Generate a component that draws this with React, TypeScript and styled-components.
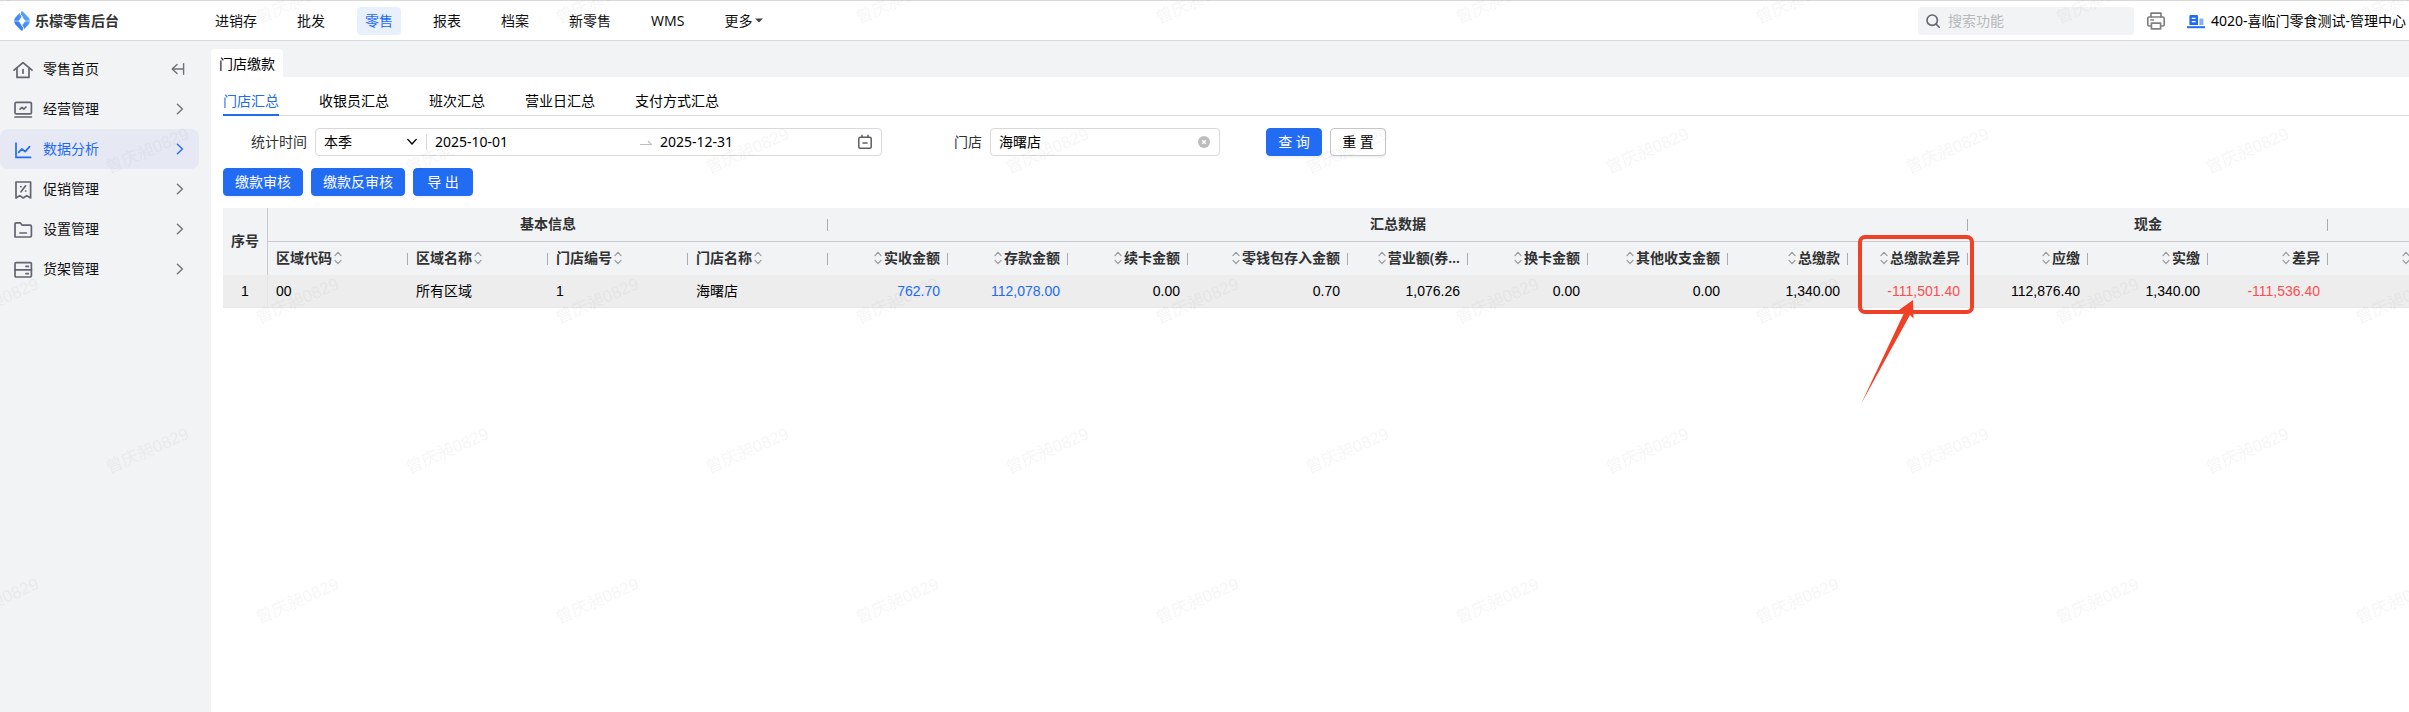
import React from "react";
import styled, { createGlobalStyle } from "styled-components";

const ui = `"Noto Sans", "Noto Sans CJK SC", sans-serif`;
const numeric = `"Liberation Sans", "Noto Sans CJK SC", sans-serif`;

const blue = "#226bf3";
const grey = "#f1f3f5";
const line = "#d9d9d9";

const GlobalStyle = createGlobalStyle`
  *, *::before, *::after { box-sizing: border-box; }
  body { margin: 0; background: #fff; color: #000; font: 14px/20px ${ui}; overflow-x: hidden; }
  button, input, select { font: inherit; color: inherit; }
  a { color: inherit; text-decoration: none; }
`;

const Page = styled.div`
  position: relative;
  display: flex;
  flex-direction: column;
  min-height: 100vh;
  overflow: hidden;
`;

const Header = styled.header`
  display: flex;
  align-items: center;
  height: 41px;
  padding-right: 3px;
  background: #fff;
  border-top: 1px solid ${line};
  border-bottom: 1px solid ${line};
`;

const Brand = styled.a`
  display: flex;
  align-items: center;
  gap: 5px;
  width: 207px;
  padding-left: 14px;
  color: #333;
  font-weight: 700;
`;

const Nav = styled.nav`
  display: flex;
  gap: 24px;
  flex: 1;
`;

const NavLink = styled.a<{ $active?: boolean }>`
  display: flex;
  align-items: center;
  gap: 2px;
  height: 28px;
  padding: 0 8px;
  border-radius: 4px;
  white-space: nowrap;
  background: ${(p) => (p.$active ? "#e8effd" : "transparent")};
  color: ${(p) => (p.$active ? blue : "#111")};
`;

const HeaderTools = styled.div`
  display: flex;
  align-items: center;
`;

const SearchBox = styled.label`
  display: flex;
  align-items: center;
  gap: 8px;
  width: 216px;
  height: 28px;
  padding: 0 8px;
  border-radius: 4px;
  background: ${grey};
`;

const SearchInput = styled.input`
  flex: 1;
  min-width: 0;
  padding: 0;
  border: 0;
  outline: 0;
  background: transparent;
  &::placeholder { color: #b8b9bc; opacity: 1; }
`;

const IconButton = styled.button`
  display: flex;
  padding: 0;
  border: 0;
  background: transparent;
  color: #707277;
`;

const PrintButton = styled(IconButton)`
  margin: 0 21px 0 12px;
`;

const Account = styled.a`
  display: flex;
  align-items: center;
  gap: 6px;
  white-space: nowrap;
`;

const Body = styled.div`
  display: flex;
  flex: 1;
  background: ${grey};
`;

const Sidebar = styled.aside`
  flex: none;
  width: 211px;
  padding: 8px 12px 0 0;
`;

const SideItem = styled.div<{ $active?: boolean }>`
  display: flex;
  align-items: center;
  height: 40px;
  padding: 0 14px 0 13px;
  border-radius: 8px;
  background: ${(p) => (p.$active ? "#e6e9f4" : "transparent")};
  color: ${(p) => (p.$active ? blue : "#111")};
`;

const SideLink = styled.a<{ $active?: boolean }>`
  display: flex;
  align-items: center;
  gap: 10px;
  flex: 1;
  svg { color: ${(p) => (p.$active ? blue : "#63646f")}; }
`;

const SideToggle = styled(IconButton)<{ $active?: boolean }>`
  color: ${(p) => (p.$active ? blue : "#707277")};
`;

const Main = styled.main`
  flex: 1;
  min-width: 0;
  display: flex;
  flex-direction: column;
  padding-top: 8px;
`;

const PageTab = styled.a`
  align-self: flex-start;
  height: 28px;
  padding: 0 8px;
  line-height: 30px;
  border-radius: 4px 4px 0 0;
  background: #fff;
`;

const Content = styled.section`
  flex: 1;
  padding-left: 12px;
  background: #fff;
`;

const Tabs = styled.div`
  display: flex;
  gap: 40px;
  height: 39px;
  border-bottom: 1px solid ${line};
`;

const Tab = styled.button<{ $active?: boolean }>`
  height: 39px;
  padding: 14px 0 3px;
  border: 0;
  border-bottom: 2px solid ${(p) => (p.$active ? blue : "transparent")};
  background: none;
  color: ${(p) => (p.$active ? blue : "#000")};
  white-space: nowrap;
`;

const Filters = styled.form`
  display: flex;
  align-items: center;
  padding: 12px 0;
`;

const Field = styled.div`
  display: flex;
  align-items: center;
  gap: 8px;
  color: #000;
`;

const DateField = styled(Field)`
  margin-left: 28px;
`;

const StoreField = styled(Field)`
  margin-left: 72px;
`;

const Label = styled.label`
  color: #303133;
  white-space: nowrap;
`;

const Box = styled.div<{ $width: number }>`
  display: flex;
  align-items: center;
  width: ${(p) => p.$width}px;
  height: 28px;
  padding-right: 9px;
  border: 1px solid ${line};
  border-radius: 4px;
`;

const SelectWrap = styled.div`
  display: flex;
  align-items: center;
  width: 111px;
  height: 16px;
  padding-right: 9px;
  border-right: 1px solid ${line};
`;

const PeriodSelect = styled.select`
  flex: 1;
  min-width: 0;
  padding: 0 0 0 8px;
  border: 0;
  outline: 0;
  appearance: none;
  background: transparent;
`;

const TextInput = styled.input<{ $width?: number }>`
  flex: ${(p) => (p.$width ? `0 0 ${p.$width}px` : "1")};
  min-width: 0;
  padding: 0 8px;
  border: 0;
  outline: 0;
  background: transparent;
`;

const FilterActions = styled.div`
  display: flex;
  gap: 8px;
  margin-left: 46px;
`;

const Button = styled.button<{ $plain?: boolean; $min?: number }>`
  min-width: ${(p) => p.$min ?? 56}px;
  height: 28px;
  padding: 0 11px;
  border: 1px solid ${(p) => (p.$plain ? "#c4c5c8" : blue)};
  border-radius: 4px;
  background: ${(p) => (p.$plain ? "#fff" : blue)};
  color: ${(p) => (p.$plain ? "#000" : "#fff")};
  box-shadow: 0 2px 0 rgba(0, 0, 0, 0.04);
  white-space: nowrap;
`;

const Toolbar = styled.div`
  display: flex;
  gap: 8px;
  padding-bottom: 12px;
`;

const TableArea = styled.div`
  position: relative;
`;

const TableScroll = styled.div`
  overflow: hidden;
`;

const Table = styled.table`
  width: 2195px;
  table-layout: fixed;
  border-collapse: separate;
  border-spacing: 0;
  font-family: ${numeric};
`;

const Th = styled.th<{ $align?: string; $group?: boolean; $index?: boolean }>`
  height: ${(p) => (p.$group ? 34 : 33)}px;
  padding: 0 8px 2px;
  overflow: hidden;
  color: #303133;
  font-family: ${ui};
  font-weight: 600;
  text-align: ${(p) => p.$align ?? "center"};
  white-space: nowrap;
  background: ${(p) =>
    p.$index ? grey : `linear-gradient(#a9abb8, #a9abb8) no-repeat right center / 1px 12px ${grey}`};
  border-bottom: ${(p) => (p.$group ? "1px solid #c8cacf" : "0")};
  border-right: ${(p) => (p.$index ? "1px solid #c8cacf" : "0")};
`;

const HeadCell = styled.span<{ $end?: boolean }>`
  display: flex;
  align-items: center;
  gap: 2px;
  flex-direction: ${(p) => (p.$end ? "row-reverse" : "row")};
`;

const Td = styled.td<{ $align?: string; $tone?: string; $index?: boolean }>`
  height: 33px;
  padding: 0 8px 1px;
  background: #ededed;
  border-bottom: 1px solid #e6e6e6;
  border-right: ${(p) => (p.$index ? "1px solid #e6e6e6" : "0")};
  text-align: ${(p) => p.$align ?? "left"};
  color: ${(p) => p.$tone ?? "#000"};
  white-space: nowrap;
`;

const Callout = styled.svg`
  position: absolute;
  left: 1634px;
  top: 26px;
  pointer-events: none;
`;

const WatermarkLayer = styled.svg`
  position: absolute;
  inset: 0;
  width: 100%;
  height: 100%;
  pointer-events: none;
`;

const strokeProps = {
  fill: "none",
  stroke: "currentColor",
  strokeWidth: 1.7,
  strokeLinecap: "round" as const,
  strokeLinejoin: "round" as const,
};

const sideIcons: Record<string, React.ReactNode> = {
  home: (
    <>
      <path d="M1 11.2 10 3.6l9 7.600" />
      <path d="M4 9.400V18.400h12V9.400" />
      <path d="M10 10.600v3.600" />
    </>
  ),
  operate: (
    <>
      <rect x="2" y="3.400" width="16.4" height="11.4" rx="1.4" />
      <path d="M2 18h16.4" />
      <path d="m7 10.200 2-1.8 1.8 1.8L13 8" />
    </>
  ),
  chart: (
    <>
      <path d="M3 4v14.4h14.6" />
      <path d="m5.6 13.4 3.2-3.400 3.4 2.600 4.400-5" />
    </>
  ),
  promo: (
    <>
      <path d="M3 3h14.6V19l-3.8-2.4-3.5 2.4-3.5-2.4L3 19z" />
      <path d="m12.6 6.8-4.6 6M7.8 7.6h.2M12.6 12h.2" />
    </>
  ),
  folder: (
    <>
      <path d="M2 18V5c0-.7.4-1.2 1.2-1.2h4l2 2.4h8c.8 0 1.2.4 1.2 1.2v9.400c0 .8-.4 1.2-1.2 1.2z" />
      <path d="M7 14h6.4" />
    </>
  ),
  shelf: (
    <>
      <rect x="2" y="3.600" width="16.4" height="14.4" rx="1.2" />
      <path d="M2 10.8h16.4M13 7.400h2.4M13 14.600h2.4" />
    </>
  ),
};

function SideIcon({ name }: { name: string }) {
  return (
    <svg width="20" height="20" viewBox="0 0 20 20" aria-hidden="true" {...strokeProps}>
      {sideIcons[name]}
    </svg>
  );
}

function Chevron({ down }: { down?: boolean }) {
  return (
    <svg width="10" height="12" viewBox="0 0 10 12" aria-hidden="true" {...strokeProps} strokeWidth={1.4}>
      <path d={down ? "M0.8 3.4 5 8l4.2-4.6" : "m2.4 1.2 5 4.8-5 4.8"} />
    </svg>
  );
}

function Sorter() {
  return (
    <svg width="8" height="14" viewBox="0 0 8 14" aria-hidden="true" {...strokeProps} stroke="#9a9ca0" strokeWidth={1.3}>
      <path d="M1 4.6 4 1.4l3 3.2M1 9.4l3 3.2 3-3.2" />
    </svg>
  );
}

function Logo() {
  return (
    <svg width="16" height="20" viewBox="0 0 16 20" aria-hidden="true">
      <defs>
        <linearGradient id="brand" x1="1" y1="0" x2="0" y2="1">
          <stop offset="0" stopColor="#6db2fd" />
          <stop offset="1" stopColor="#1f6cf2" />
        </linearGradient>
      </defs>
      <path
        d="M7 .8C7.600.2 8.400.2 9 .8l5.600 5.800c1.600 1.800 1.600 5 0 6.800L9 19.200c-.6.6-1.400.6-2 0L1.400 13.400C-.2 11.600-.2 8.400 1.400 6.600z"
        fill="url(#brand)"
      />
      <path d="M8 5.200 11.400 10 8 14.800 4.600 10z" fill="#fff" />
      <path d="M8.400 6 6.600 3.600V0M7.600 14l1.800 2.400V20" fill="none" stroke="#fff" strokeWidth="1" />
      <path d="M5 10H.2M11 10h4.800" stroke="#fff" strokeWidth="0.6" />
    </svg>
  );
}

const navItems = ["进销存", "批发", "零售", "报表", "档案", "新零售", "WMS", "更多"];

const sideItems = [
  { icon: "home", label: "零售首页" },
  { icon: "operate", label: "经营管理" },
  { icon: "chart", label: "数据分析" },
  { icon: "promo", label: "促销管理" },
  { icon: "folder", label: "设置管理" },
  { icon: "shelf", label: "货架管理" },
];

const tabs = ["门店汇总", "收银员汇总", "班次汇总", "营业日汇总", "支付方式汇总"];

type Column = { title: string; value: string; width: number; text?: boolean; tone?: string };

const columns: Column[] = [
  { title: "区域代码", value: "00", width: 140, text: true },
  { title: "区域名称", value: "所有区域", width: 140, text: true },
  { title: "门店编号", value: "1", width: 140, text: true },
  { title: "门店名称", value: "海曙店", width: 140, text: true },
  { title: "实收金额", value: "762.70", width: 120, tone: blue },
  { title: "存款金额", value: "112,078.00", width: 120, tone: blue },
  { title: "续卡金额", value: "0.00", width: 120 },
  { title: "零钱包存入金额", value: "0.70", width: 160 },
  { title: "营业额(券…", value: "1,076.26", width: 120 },
  { title: "换卡金额", value: "0.00", width: 120 },
  { title: "其他收支金额", value: "0.00", width: 140 },
  { title: "总缴款", value: "1,340.00", width: 120 },
  { title: "总缴款差异", value: "-111,501.40", width: 120, tone: "#ff4d4f" },
  { title: "应缴", value: "112,876.40", width: 120 },
  { title: "实缴", value: "1,340.00", width: 120 },
  { title: "差异", value: "-111,536.40", width: 120, tone: "#ff4d4f" },
  { title: "", value: "", width: 90 },
];

function DataTable() {
  return (
    <Table>
      <colgroup>
        <col width={45} />
        {columns.map((c, i) => (
          <col key={i} width={c.width} />
        ))}
      </colgroup>
      <thead>
        <tr>
          <Th rowSpan={2} $index>序号</Th>
          <Th colSpan={4} $group>基本信息</Th>
          <Th colSpan={9} $group>汇总数据</Th>
          <Th colSpan={3} $group>现金</Th>
          <Th $group />
        </tr>
        <tr>
          {columns.map((c, i) => (
            <Th key={i} $align={c.text ? "left" : "right"}>
              <HeadCell $end={!c.text}>
                {c.title}
                <Sorter />
              </HeadCell>
            </Th>
          ))}
        </tr>
      </thead>
      <tbody>
        <tr>
          <Td $index $align="center">1</Td>
          {columns.map((c, i) => (
            <Td key={i} $align={c.text ? "left" : "right"} $tone={c.tone}>
              {c.value}
            </Td>
          ))}
        </tr>
      </tbody>
    </Table>
  );
}

function Watermark() {
  return (
    <WatermarkLayer aria-hidden="true">
      <defs>
        <pattern id="wm" x="0" y="0" width="300" height="300" patternUnits="userSpaceOnUse">
          <g fill="#000" fillOpacity="0.035" fontSize="17" fontFamily={numeric}>
            <text transform="translate(109 174) rotate(-24)">曾庆昶0829</text>
            <text transform="translate(259 24) rotate(-24)">曾庆昶0829</text>
            <text transform="translate(-41 24) rotate(-24)">曾庆昶0829</text>
            <text transform="translate(259 324) rotate(-24)">曾庆昶0829</text>
            <text transform="translate(-41 324) rotate(-24)">曾庆昶0829</text>
          </g>
        </pattern>
      </defs>
      <rect width="100%" height="100%" fill="url(#wm)" />
    </WatermarkLayer>
  );
}

export default function App() {
  return (
    <Page>
      <GlobalStyle />
      <Header>
        <Brand href="#">
          <Logo />
          乐檬零售后台
        </Brand>
        <Nav>
          {navItems.map((n) => (
            <NavLink key={n} href="#" $active={n === "零售"}>
              {n}
              {n === "更多" && (
                <svg width="10" height="6" viewBox="0 0 10 6" aria-hidden="true">
                  <path d="M1 .5h8L5 4.500z" fill="#444" />
                </svg>
              )}
            </NavLink>
          ))}
        </Nav>
        <HeaderTools>
          <SearchBox>
            <svg width="14" height="14" viewBox="0 0 14 14" aria-hidden="true" {...strokeProps} stroke="#63646f" strokeWidth={1.6}>
              <circle cx="6.200" cy="6.200" r="5.200" />
              <path d="m10.200 10.200 3 3" />
            </svg>
            <SearchInput placeholder="搜索功能" aria-label="搜索功能" />
          </SearchBox>
          <PrintButton aria-label="打印">
            <svg width="20" height="20" viewBox="0 0 20 20" aria-hidden="true" {...strokeProps} stroke="#808080">
              <path d="M5 6V2.200h10V6" />
              <path d="M5 15H3.200C2.400 15 1.800 14.500 1.800 13.600V7.600C1.800 6.600 2.400 6 3.200 6h13.600c.8 0 1.400.6 1.400 1.600v6c0 .9-.6 1.400-1.400 1.400H15" />
              <path d="M5.400 12.200h9.200v5.600H5.400zM5 9h2.400" />
            </svg>
          </PrintButton>
          <Account href="#">
            <svg width="18" height="16" viewBox="0 0 18 16" aria-hidden="true">
              <path d="M2.400 12V3.200C2.400 2.500 2.900 2 3.600 2h6.200c.7 0 1.200.5 1.200 1.200V12z" fill={blue} />
              <path d="M4.800 5.400h3.800M4.800 8.600h3.800" stroke="#fff" strokeWidth="1.400" />
              <path d="M12.400 5.600h2.800c.8 0 1.200.4 1.200 1.200V12h-4z" fill="#86aef9" />
              <path d="M0 14.200h18" stroke={blue} strokeWidth="2" />
            </svg>
            4020-喜临门零食测试-管理中心
          </Account>
        </HeaderTools>
      </Header>

      <Body>
        <Sidebar>
          {sideItems.map((s) => {
            const active = s.icon === "chart";
            return (
              <SideItem key={s.icon} $active={active}>
                <SideLink href="#" $active={active}>
                  <SideIcon name={s.icon} />
                  {s.label}
                </SideLink>
                <SideToggle aria-label={s.label} $active={active}>
                  {s.icon === "home" ? (
                    <svg width="14" height="12" viewBox="0 0 14 12" aria-hidden="true" {...strokeProps} strokeWidth={1.4}>
                      <path d="M6 1.400 1.200 6 6 10.600M1.200 6H12M12.600.8v10.400" />
                    </svg>
                  ) : (
                    <Chevron />
                  )}
                </SideToggle>
              </SideItem>
            );
          })}
        </Sidebar>

        <Main>
          <PageTab href="#">门店缴款</PageTab>
          <Content>
            <Tabs role="tablist">
              {tabs.map((t, i) => (
                <Tab key={t} role="tab" aria-selected={i === 0} $active={i === 0}>
                  {t}
                </Tab>
              ))}
            </Tabs>

            <Filters onSubmit={(e) => e.preventDefault()}>
              <DateField>
                <Label htmlFor="period">统计时间</Label>
                <Box $width={567}>
                  <SelectWrap>
                    <PeriodSelect id="period" defaultValue="本季">
                      <option>本季</option>
                    </PeriodSelect>
                    <Chevron down />
                  </SelectWrap>
                  <TextInput $width={213} aria-label="开始日期" defaultValue="2025-10-01" />
                  <svg width="12" height="8" viewBox="0 0 12 8" aria-hidden="true">
                    <path d="M0 6.500h11.500L8 3" fill="none" stroke="#bfbfbf" strokeWidth="1.200" />
                  </svg>
                  <TextInput aria-label="结束日期" defaultValue="2025-12-31" />
                  <svg width="14" height="16" viewBox="0 0 14 16" aria-hidden="true" {...strokeProps} stroke="#5c5d62" strokeWidth={1.5}>
                    <rect x="0.800" y="3.200" width="12.400" height="11" rx="1.500" />
                    <path d="M4 1.200v2M10 1.200v2M5 9h4" />
                  </svg>
                </Box>
              </DateField>
              <StoreField>
                <Label htmlFor="store">门店</Label>
                <Box $width={230}>
                  <TextInput id="store" defaultValue="海曙店" />
                  <IconButton type="button" aria-label="清除">
                    <svg width="12" height="12" viewBox="0 0 12 12" aria-hidden="true">
                      <circle cx="6" cy="6" r="6" fill="#bdbdbd" />
                      <path d="m4.200 4.200 3.600 3.600M7.800 4.200 4.200 7.800" stroke="#fff" strokeWidth="1.400" />
                    </svg>
                  </IconButton>
                </Box>
              </StoreField>
              <FilterActions>
                <Button type="submit">查 询</Button>
                <Button type="reset" $plain>重 置</Button>
              </FilterActions>
            </Filters>

            <Toolbar>
              <Button>缴款审核</Button>
              <Button>缴款反审核</Button>
              <Button $min={60}>导 出</Button>
            </Toolbar>

            <TableArea>
              <TableScroll>
                <DataTable />
              </TableScroll>
              <Callout width="120" height="174" viewBox="0 0 120 174" aria-hidden="true">
                <rect x="3" y="3" width="112" height="75" rx="5" fill="none" stroke="#ee4128" strokeWidth="4" />
                <path d="M56 66 42 76l5 3L4 170 53 81l3.500 3.500z" fill="#ee4128" />
              </Callout>
            </TableArea>
          </Content>
        </Main>
      </Body>
      <Watermark />
    </Page>
  );
}
